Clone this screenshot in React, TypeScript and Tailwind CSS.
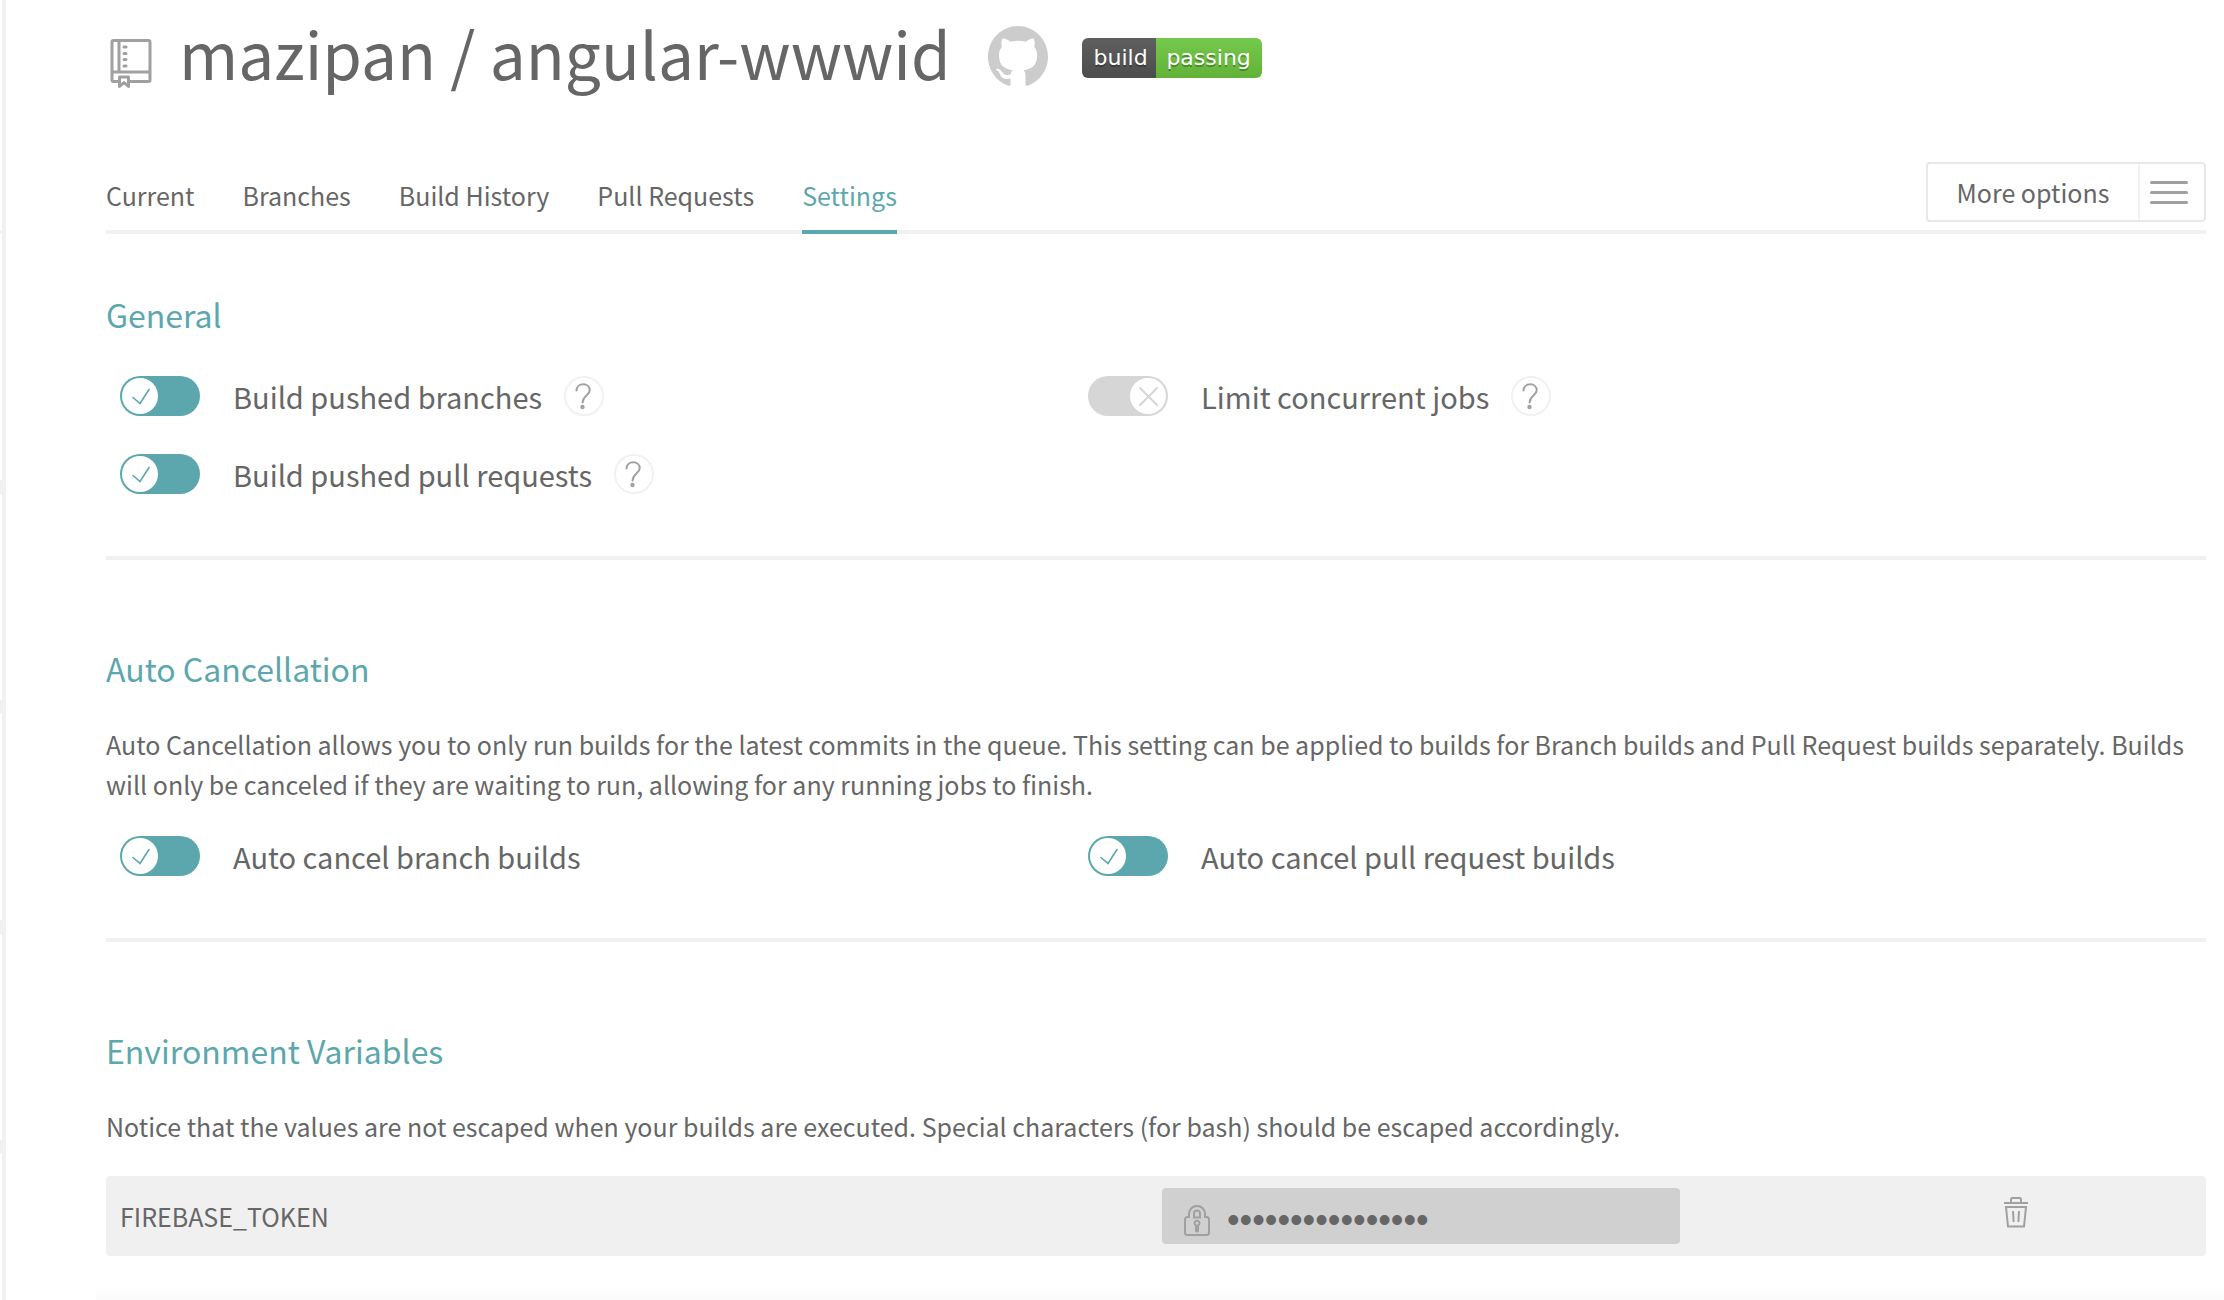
import { useState } from "react";

const tabs = ["Current", "Branches", "Build History", "Pull Requests", "Settings"];

function RepoIcon() {
  return (
    <svg className="mt-[38px] h-[51px] w-[42px] shrink-0" viewBox="0 0 42 51" fill="none" stroke="#a0a0a0" strokeWidth="3" aria-hidden="true">
      <path d="M8 43.5H3.5a1.5 1.5 0 0 1-1.5-1.5V4a1.5 1.5 0 0 1 1.500-1.500h35A1.500 1.500 0 0 1 40 4v38a1.500 1.500 0 0 1-1.500 1.500H20" />
      <path d="M2 34h38M9 3v31" />
      <path d="M14 9h2M14 15.500h2M14 21.500h2M14 28h2" strokeLinecap="round" />
      <path d="M9.500 48.500V39h9v9.500l-4.500-4z" strokeLinejoin="round" />
    </svg>
  );
}

function GithubIcon() {
  return (
    <svg className="h-[60px] w-[60px]" viewBox="0 0 16 15.65" preserveAspectRatio="none" fill="#cccccc" aria-hidden="true">
      <path d="M8 0C3.58 0 0 3.58 0 8c0 3.54 2.29 6.53 5.47 7.59.4.07.55-.17.55-.38 0-.19-.01-.82-.01-1.49-2.01.37-2.53-.49-2.69-.94-.09-.23-.48-.94-.82-1.13-.28-.15-.68-.52-.01-.53.63-.01 1.08.58 1.23.82.72 1.21 1.87.87 2.33.66.07-.52.28-.87.51-1.07-1.78-.2-3.64-.89-3.64-3.95 0-.87.31-1.59.82-2.15-.08-.2-.36-1.02.08-2.12 0 0 .67-.21 2.2.82.64-.18 1.32-.27 2-.27s1.36.09 2 .27c1.53-1.04 2.2-.82 2.2-.82.44 1.1.16 1.92.08 2.12.51.56.82 1.27.82 2.15 0 3.07-1.87 3.75-3.65 3.95.29.25.54.73.54 1.48 0 1.07-.01 1.93-.01 2.2 0 .21.15.46.55.38A8.01 8.01 0 0 0 16 8c0-4.42-3.58-8-8-8z" />
    </svg>
  );
}

function LockIcon() {
  return (
    <svg className="h-[31px] w-[26px] shrink-0" viewBox="0 0 26 31" fill="none" stroke="#a0a0a0" strokeWidth="2" aria-hidden="true">
      <path d="M5 12V8.500a8 7.500 0 0 1 16 0V12h1.500a2.500 2.500 0 0 1 2.500 2.500v13a2.500 2.500 0 0 1-2.500 2.500h-19A2.500 2.500 0 0 1 1 27.500v-13A2.500 2.500 0 0 1 3.500 12z" />
      <path d="M10 12.500V8.500a3 3 0 0 1 6 0v4z" />
      <path d="M12 20.500a2.500 2.500 0 1 1 2 0v5a1 1 0 0 1-2 0z" />
    </svg>
  );
}

function TrashIcon() {
  return (
    <svg className="h-[31px] w-[24px]" viewBox="0 0 24 31" fill="none" stroke="#a0a0a0" strokeWidth="2" aria-hidden="true">
      <path d="M0 6h24M7 6V2.500A1.500 1.500 0 0 1 8.500 1h7A1.500 1.500 0 0 1 17 2.500V6" />
      <path d="M2 10h20l-2 19.500H4z" />
      <path d="M9 14l.6 11M15 14l-.6 11" />
    </svg>
  );
}

function HelpButton({ topic }: { topic: string }) {
  return (
    <button type="button" aria-label={`Help: ${topic}`} className="ml-[22px] h-10 w-10 shrink-0 rounded-full border-2 border-[#f1f1f1]">
      <svg className="h-9 w-9" viewBox="2 2 36 36" fill="none" stroke="#a0a0a0" strokeWidth="2" strokeLinecap="round" aria-hidden="true">
        <path d="M12.500 14.500c.2-3.700 3-6.200 6.700-6.200 3.800 0 6.500 2.600 6.500 6 0 5-6.700 5.200-7.100 12.200" />
        <circle cx="18.500" cy="31" r="1.200" />
      </svg>
    </button>
  );
}

function Toggle({ id, label, initial = true, help = false }: { id: string; label: string; initial?: boolean; help?: boolean }) {
  const [on, setOn] = useState(initial);
  return (
    <div className="flex h-10 items-center pl-[14px]">
      <label htmlFor={id} className="flex cursor-pointer items-center gap-[33px]">
        <input id={id} type="checkbox" checked={on} onChange={() => setOn(!on)} className="peer sr-only" />
        <span className={on ? "flex h-10 w-20 rounded-full bg-[#5ca7ad] p-0.5" : "flex h-10 w-20 justify-end rounded-full bg-[#d6d6d6] p-0.5"}>
          <span className="h-9 w-9 rounded-full bg-white">
            <svg className="h-9 w-9" viewBox="0 0 36 36" fill="none" strokeLinecap="round" aria-hidden="true">
              {on ? (
                <path d="M11 19.500l7 6L27 11.500" stroke="#5ca7ad" strokeWidth="1.600" />
              ) : (
                <path d="M10 10l17 17M27 10L10 27" stroke="#d6d6d6" strokeWidth="2" />
              )}
            </svg>
          </span>
        </span>
        <span className="text-[29px] leading-10">{label}</span>
      </label>
      {help && <HelpButton topic={label} />}
    </div>
  );
}

function Heading({ children }: { children: string }) {
  return <h2 className="text-[32px] leading-[48px] text-[#5ca7ad]">{children}</h2>;
}

export default function App() {
  return (
    <div className="flex min-h-screen bg-white font-['Noto_Sans_CJK_SC','Noto_Sans',sans-serif] text-[#666666]">
      <aside className="flex w-1.5 shrink-0 flex-col border-r-4 border-[#f1f1f1]" aria-hidden="true">
        <div className="mt-[230px] h-1 bg-[#f1f1f1]" />
        <div className="mt-[246px] flex flex-col gap-[206px]">
          <div className="h-[14px] bg-[#f1f1f1]" />
          <div className="h-[14px] bg-[#f1f1f1]" />
          <div className="h-[14px] bg-[#f1f1f1]" />
          <div className="h-[14px] bg-[#f1f1f1]" />
        </div>
      </aside>

      <div className="flex min-w-0 flex-1 flex-col justify-between">
        <main className="pr-[18px] pl-[100px]">
          <header className="flex h-[104px] items-start pl-1">
            <RepoIcon />
            <h1 className="ml-[27px] text-[64px] leading-[104px] whitespace-nowrap">
              <a href="#owner">mazipan</a> / <a href="#repo">angular-wwwid</a>
            </h1>
            <a href="#github" aria-label="View on GitHub" className="mt-[26px] ml-[37px] shrink-0">
              <GithubIcon />
            </a>
            <button
              type="button"
              className="mt-[38px] ml-[34px] flex h-10 w-[180px] shrink-0 overflow-hidden rounded-md font-['DejaVu_Sans',sans-serif] text-[22px] leading-10 text-white [text-shadow:0_2px_0_rgba(1,1,1,0.3)]"
            >
              <span className="w-[74px] bg-linear-to-b from-[#5f5f5f] to-[#4c4c4c] pl-1 text-center">build</span>
              <span className="flex-1 bg-linear-to-b from-[#75c94c] to-[#62b238] text-center">passing</span>
            </button>
          </header>

          <nav className="mt-[58px] flex items-end justify-between border-b-4 border-[#f1f1f1] text-[25px]">
            <ul className="-mb-1 flex gap-12">
              {tabs.map((tab) => (
                <li key={tab}>
                  <a
                    href={`#${tab}`}
                    className={
                      tab === "Settings"
                        ? "block border-b-4 border-[#5ca7ad] pb-[15px] leading-10 text-[#5ca7ad]"
                        : "block border-b-4 border-transparent pb-[15px] leading-10"
                    }
                  >
                    {tab}
                  </a>
                </li>
              ))}
            </ul>
            <button type="button" className="mb-2 flex h-[60px] w-[280px] items-center rounded border-2 border-[#e8e8e8]">
              <span className="flex-1 text-center leading-[54px]">More options</span>
              <span className="flex h-full w-[66px] flex-col items-start justify-center gap-[7px] border-l-2 border-[#f1f1f1] pl-[10px]">
                <span className="h-[3px] w-[38px] rounded-full bg-[#a0a0a0]" />
                <span className="h-[3px] w-[38px] rounded-full bg-[#a0a0a0]" />
                <span className="h-[3px] w-[38px] rounded-full bg-[#a0a0a0]" />
              </span>
            </button>
          </nav>

          <section className="border-b-4 border-[#f1f1f1] pt-14 pb-[62px]">
            <Heading>General</Heading>
            <div className="mt-[38px] grid grid-cols-[461fr_539fr] gap-y-[38px]">
              <Toggle id="pushes" label="Build pushed branches" help />
              <Toggle id="limit" label="Limit concurrent jobs" initial={false} help />
              <Toggle id="pulls" label="Build pushed pull requests" help />
            </div>
          </section>

          <section className="border-b-4 border-[#f1f1f1] pt-[84px] pb-[62px]">
            <Heading>Auto Cancellation</Heading>
            <p className="mt-8 text-[25px] leading-10">
              Auto Cancellation allows you to only run builds for the latest commits in the queue. This setting can be applied to builds for
              Branch builds and Pull Request builds separately. Builds will only be canceled if they are waiting to run, allowing for any
              running jobs to finish.
            </p>
            <div className="mt-8 grid grid-cols-[461fr_539fr]">
              <Toggle id="cancel-branches" label="Auto cancel branch builds" />
              <Toggle id="cancel-pulls" label="Auto cancel pull request builds" />
            </div>
          </section>

          <section className="pt-[84px]">
            <Heading>Environment Variables</Heading>
            <p className="mt-8 text-[25px] leading-10">
              Notice that the values are not escaped when your builds are executed. Special characters (for bash) should be escaped
              accordingly.
            </p>
            <ul className="mt-[30px]">
              <li className="grid h-20 grid-cols-[1056fr_518fr_526fr] items-center rounded bg-[#f0f0f0]">
                <label htmlFor="token" className="pl-[14px] text-[25px] leading-10">
                  FIREBASE_TOKEN
                </label>
                <div className="flex h-14 min-w-0 items-center gap-[17px] rounded bg-[#d0d0d0] pt-2 pl-[22px]">
                  <LockIcon />
                  <input
                    id="token"
                    type="password"
                    readOnly
                    defaultValue="firebase_token_1"
                    className="h-10 w-full min-w-0 flex-1 bg-transparent font-['Liberation_Sans',sans-serif] text-[36px] leading-10 outline-none"
                  />
                </div>
                <div className="flex justify-end pr-[178px] pb-2">
                  <button type="button" aria-label="Delete FIREBASE_TOKEN">
                    <TrashIcon />
                  </button>
                </div>
              </li>
            </ul>
          </section>
        </main>
        <div className="ml-[90px] h-3 bg-linear-to-b from-white to-[#fafafa]" />
      </div>
    </div>
  );
}
